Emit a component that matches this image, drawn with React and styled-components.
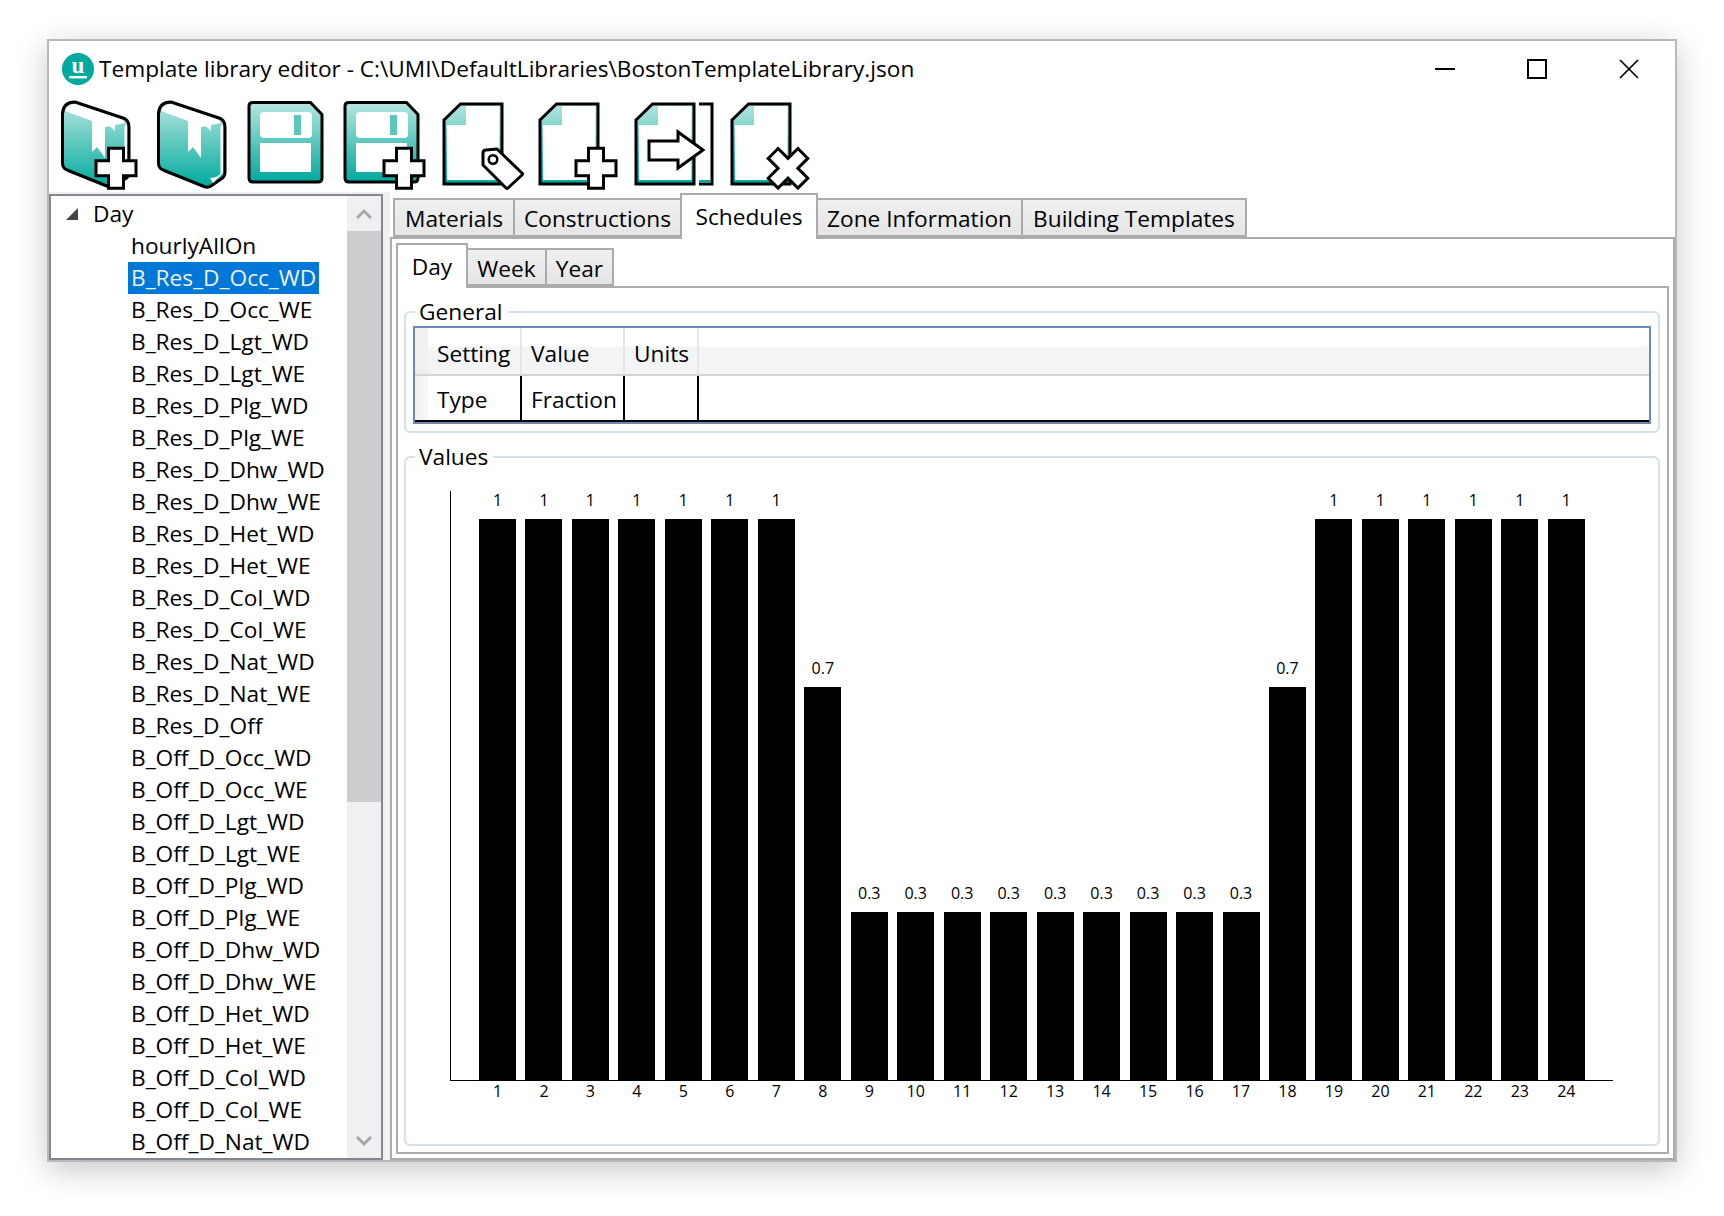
import React from "react";
import styled, { createGlobalStyle } from "styled-components";

const UI_FONT = `"Open Sans", "Noto Sans", "Liberation Sans", sans-serif`;
const TEXT_SIZE = "22.7px";

const GlobalStyle = createGlobalStyle`
  html, body {
    margin: 0;
    padding: 0;
    background: #fff;
  }
  body {
    font-family: ${UI_FONT};
    color: #000;
  }
  * {
    box-sizing: border-box;
  }
`;

const scheduleNames = [
  "hourlyAllOn",
  "B_Res_D_Occ_WD",
  "B_Res_D_Occ_WE",
  "B_Res_D_Lgt_WD",
  "B_Res_D_Lgt_WE",
  "B_Res_D_Plg_WD",
  "B_Res_D_Plg_WE",
  "B_Res_D_Dhw_WD",
  "B_Res_D_Dhw_WE",
  "B_Res_D_Het_WD",
  "B_Res_D_Het_WE",
  "B_Res_D_Col_WD",
  "B_Res_D_Col_WE",
  "B_Res_D_Nat_WD",
  "B_Res_D_Nat_WE",
  "B_Res_D_Off",
  "B_Off_D_Occ_WD",
  "B_Off_D_Occ_WE",
  "B_Off_D_Lgt_WD",
  "B_Off_D_Lgt_WE",
  "B_Off_D_Plg_WD",
  "B_Off_D_Plg_WE",
  "B_Off_D_Dhw_WD",
  "B_Off_D_Dhw_WE",
  "B_Off_D_Het_WD",
  "B_Off_D_Het_WE",
  "B_Off_D_Col_WD",
  "B_Off_D_Col_WE",
  "B_Off_D_Nat_WD",
];

const hourlyValues = [
  1, 1, 1, 1, 1, 1, 1, 0.7, 0.3, 0.3, 0.3, 0.3, 0.3, 0.3, 0.3, 0.3, 0.3, 0.7, 1,
  1, 1, 1, 1, 1,
];

const mainTabs = [
  { label: "Materials", width: 120 },
  { label: "Constructions", width: 167 },
  { label: "Schedules", width: 136, active: true },
  { label: "Zone Information", width: 205 },
  { label: "Building Templates", width: 224 },
];

const subTabs = [
  { label: "Day", width: 70, active: true },
  { label: "Week", width: 79 },
  { label: "Year", width: 67 },
];

const Page = styled.div`
  width: 1724px;
  height: 1216px;
  padding: 39px 0 0 47px;
`;

const Window = styled.div`
  display: flex;
  flex-direction: column;
  width: 1630px;
  height: 1123px;
  background: #fff;
  border: 2px solid #b9b9b9;
  box-shadow: 0 8px 30px rgba(0, 0, 0, 0.22);
`;

const TitleBar = styled.div`
  display: flex;
  align-items: center;
  height: 55px;
  padding-left: 13px;
`;

const TitleText = styled.div`
  flex: 1;
  margin-left: 5px;
  font-size: 22.65px;
  white-space: nowrap;
`;

const WindowButton = styled.button`
  display: flex;
  align-items: center;
  justify-content: center;
  width: 92px;
  height: 40px;
  padding: 0;
  border: 0;
  background: none;
`;

const WindowButtons = styled.div`
  display: flex;
`;

const Toolbar = styled.div`
  display: flex;
  height: 96px;
  padding-left: 9px;
`;

const ToolButton = styled.svg`
  display: block;
  width: 96px;
  height: 96px;
  overflow: visible;
`;

const Body = styled.div`
  display: flex;
  flex: 1;
  min-height: 0;
  background: #f0f0f0;
`;

const TreePanel = styled.div`
  display: flex;
  width: 334px;
  margin-top: 2px;
  background: #fff;
  border: 2px solid #828790;
  overflow: hidden;
`;

const TreeList = styled.div`
  flex: 1;
  padding-top: 1px;
  overflow: hidden;
  font-size: ${TEXT_SIZE};
`;

const TreeRootRow = styled.div`
  display: flex;
  align-items: center;
  height: 33px;
  padding-left: 15px;
  gap: 15px;
`;

const TreeRow = styled.div`
  height: 32px;
  padding-left: 77px;
  line-height: 32px;
  white-space: nowrap;
`;

const TreeLabel = styled.span`
  display: inline-block;
  height: 32px;
  padding: 0 3px;
  background: ${(p) => (p.$selected ? "#0078d7" : "transparent")};
  color: ${(p) => (p.$selected ? "#f0f0f0" : "#000")};
`;

const ScrollBar = styled.div`
  display: flex;
  flex-direction: column;
  width: 34px;
  background: #f0f0f0;
`;

const ScrollArrow = styled.div`
  display: flex;
  align-items: center;
  justify-content: center;
  height: 35px;
`;

const ScrollThumb = styled.div`
  height: 571px;
  background: #cdcdcd;
`;

const ScrollTrack = styled.div`
  flex: 1;
`;

const RightPane = styled.div`
  display: flex;
  flex-direction: column;
  width: 1285px;
  margin-left: 7px;
  padding-top: 1px;
  background: #fff;
`;

const TabStrip = styled.div`
  display: flex;
  align-items: flex-end;
  flex: none;
  height: ${(p) => p.$height}px;
  padding-left: ${(p) => p.$indent}px;
`;

const Tab = styled.div`
  position: relative;
  flex: none;
  width: ${(p) => p.$width + 2}px;
  height: ${(p) => (p.$active ? p.$tall : p.$short)}px;
  margin: 0 -2px ${(p) => (p.$active ? "-2px" : "0")} 0;
  padding-top: ${(p) => (p.$active ? 6 : 3)}px;
  border: 2px solid #ababab;
  border-bottom-width: ${(p) => (p.$active ? 0 : 2)}px;
  background: ${(p) =>
    p.$active ? "#fff" : "linear-gradient(#f0f0f0, #e5e5e5)"};
  font-size: ${TEXT_SIZE};
  line-height: 32px;
  text-align: center;
  white-space: nowrap;
  z-index: ${(p) => (p.$active ? 1 : 0)};
`;

const TabPanel = styled.div`
  display: flex;
  flex-direction: column;
  flex: 1;
  min-height: 0;
  padding: 4px;
  border: 2px solid #ababab;
`;

const SubPanel = styled.div`
  display: flex;
  flex-direction: column;
  flex: 1;
  min-height: 0;
  padding: 9px 7px 6px 6px;
  border: 2px solid #ababab;
`;

const Group = styled.fieldset`
  min-width: 0;
  margin: 0;
  padding: 0 7px 7px;
  border: 2px solid #d6e0e8;
  border-radius: 6px;
  & + & {
    margin-top: 9px;
    flex: 1;
  }
`;

const GroupTitle = styled.legend`
  height: 30px;
  margin-left: 2px;
  padding: 0 5px 0 4px;
  font-size: ${TEXT_SIZE};
  line-height: 30px;
`;

const DataGrid = styled.div`
  margin-top: -1px;
  border: 2px solid #6a8cb0;
`;

const GridRow = styled.div`
  display: grid;
  grid-template-columns: 13px 94px 103px 74px 1fr;
  grid-template-rows: ${(p) => p.$height - 2}px;
  height: ${(p) => p.$height}px;
  border-bottom: 2px solid ${(p) => p.$rule};
`;

const HeaderCell = styled.div`
  padding-left: 9px;
  border-right: 2px solid #e6e6e6;
  background: linear-gradient(#fff 0, #fff 42%, #f3f4f6 42%);
  font-size: ${TEXT_SIZE};
  line-height: 52px;
  &:last-child {
    border-right: 0;
  }
`;

const CornerCell = styled.div`
  background: #f0f0f0;
`;

const BodyCell = styled.div`
  padding-left: 9px;
  border-right: 2px solid #000;
  font-size: ${TEXT_SIZE};
  line-height: 48px;
  &:last-child {
    border-right: 0;
  }
`;

const RowHeadCell = styled.div`
  background: linear-gradient(90deg, #f0f0f0, #f8f8f8);
`;

const Chart = styled.div`
  margin: 19px 0 0 37px;
  width: 1163px;
`;

const Plot = styled.div`
  display: grid;
  grid-template-columns: repeat(24, 37px);
  grid-template-rows: minmax(0, 1fr);
  column-gap: 9.48px;
  align-items: end;
  height: 590px;
  padding-left: 28px;
  border-left: 1px solid #000;
  border-bottom: 1px solid #000;
`;

const BarColumn = styled.div`
  display: flex;
  flex-direction: column;
  align-items: center;
`;

const Bar = styled.div`
  width: 100%;
  height: ${(p) => Math.round(p.$value * 561)}px;
  background: #000;
`;

const ChartLabel = styled.div`
  font-size: 16px;
  line-height: 20px;
  text-align: center;
`;

const BarValue = styled(ChartLabel)`
  margin-bottom: 9px;
`;

const AxisRow = styled.div`
  display: grid;
  grid-template-columns: repeat(24, 37px);
  column-gap: 9.48px;
  padding: 0 0 0 28px;
  margin-left: 1px;
`;

const Plus = ({ cx = 58, cy = 72.3, angle = 0, arm = 20, half = 7.5 }) => (
  <path
    d={`M${cx - half} ${cy - arm}H${cx + half}V${cy - half}H${cx + arm}V${cy + half}H${cx + half}V${cy + arm}H${cx - half}V${cy + half}H${cx - arm}V${cy - half}H${cx - half}Z`}
    transform={angle ? `rotate(${angle} ${cx} ${cy})` : undefined}
    fill="#fff"
    stroke="#000"
    strokeWidth="3"
    strokeLinejoin="miter"
  />
);

const BookShape = () => (
  <>
    <path
      d="M4.5 18Q5 6 17 6L65 22Q71 24 71 31V76Q71 81 67 83L57 90Q54 92 50 90.5L9 74Q4.5 72 4.5 67Z"
      fill="url(#teal)"
      stroke="#000"
      strokeWidth="3"
      strokeLinejoin="round"
    />
    {/* page edge and top band */}
    <path d="M66.5 31L69 27V77L59 87L56 82Q62 82 66.5 78Z" fill="#fff" />
    <path d="M7 15Q9 8 17 8L65 24L67.5 27L57 29L56.5 36Q54 29 47 31V62L39 51L34 56V25Z" fill="#fff" />
  </>
);

const Floppy = () => (
  <>
    <path
      d="M3 6.5H60.5L72 18.5V82Q72 86 68 86H3Q-1 86 -1 82V10Q-1 6.5 3 6.5Z"
      fill="url(#teal)"
      stroke="#000"
      strokeWidth="3"
      strokeLinejoin="round"
    />
    <rect x="10" y="16" width="52" height="26" rx="4" fill="#fff" />
    <rect x="44" y="19" width="7" height="20" fill="#5cc8bc" />
    <rect x="10" y="47" width="51" height="29" fill="#fff" />
  </>
);

const Sheet = () => (
  <>
    <path
      d="M2 24L18.5 8H60V88H2Z"
      fill="url(#teal)"
      stroke="#000"
      strokeWidth="3"
      strokeLinejoin="miter"
    />
    <path d="M24 10H57.5V84H5V29H24Z" fill="#fff" />
  </>
);

const ToolIcon = ({ children, first }) => (
  <ToolButton viewBox="0 0 96 96">
    {first && (
      <defs>
        <linearGradient id="teal" x1="0" y1="0" x2="0" y2="1">
          <stop offset="0" stopColor="#b5e6df" />
          <stop offset="1" stopColor="#00a99d" />
        </linearGradient>
      </defs>
    )}
    {children}
  </ToolButton>
);

const Logo = () => (
  <svg width="32" height="32" viewBox="0 0 32 32">
    <circle cx="16" cy="16" r="16" fill="#00a99d" />
    <text
      x="16"
      y="20"
      fill="#fff"
      fontFamily="Liberation Serif, serif"
      fontWeight="700"
      fontSize="23"
      textAnchor="middle"
    >
      u
    </text>
    <rect x="7" y="23" width="18" height="2.4" fill="#fff" />
  </svg>
);

const Chevron = ({ up }) => (
  <svg width="16" height="12" viewBox="0 0 16 12">
    <polyline
      points={up ? "1,10 8,3 15,10" : "1,2 8,9 15,2"}
      fill="none"
      stroke="#a6a6a6"
      strokeWidth="3"
    />
  </svg>
);

const App = () => {
  return (
    <Page>
      <GlobalStyle />
      <Window>
        <TitleBar>
          <Logo />
          <TitleText>
            Template library editor - C:\UMI\DefaultLibraries\BostonTemplateLibrary.json
          </TitleText>
          <WindowButtons>
            <WindowButton>
              <svg width="22" height="22" viewBox="0 0 22 22">
                <rect x="1" y="10" width="20" height="2" fill="#000" />
              </svg>
            </WindowButton>
            <WindowButton>
              <svg width="20" height="20" viewBox="0 0 20 20">
                <rect x="1" y="1" width="18" height="18" fill="none" stroke="#000" strokeWidth="2" />
              </svg>
            </WindowButton>
            <WindowButton>
              <svg width="20" height="20" viewBox="0 0 20 20">
                <path d="M1 1L19 19M19 1L1 19" fill="none" stroke="#000" strokeWidth="1.7" />
              </svg>
            </WindowButton>
          </WindowButtons>
        </TitleBar>

        <Toolbar>
          <ToolIcon first>
            <BookShape />
            <Plus />
          </ToolIcon>
          <ToolIcon>
            <BookShape />
          </ToolIcon>
          <ToolIcon>
            <Floppy />
          </ToolIcon>
          <ToolIcon>
            <Floppy />
            <Plus />
          </ToolIcon>
          <ToolIcon>
            <Sheet />
            <path
              d="M41 57Q41 54 44 54L55 53L80 77Q81 78 80 79L66 92Q65 93 64 92L41 69Z"
              fill="#fff"
              stroke="#000"
              strokeWidth="3"
              strokeLinejoin="round"
            />
            <circle cx="51" cy="63.5" r="4.3" fill="#fff" stroke="#000" strokeWidth="2.5" />
          </ToolIcon>
          <ToolIcon>
            <Sheet />
            <Plus />
          </ToolIcon>
          <ToolIcon>
            <path d="M65 8H78V88H65" fill="#fff" stroke="#000" strokeWidth="3" />
            <path d="M65 84H76.5V86.5H65Z" fill="#00a99d" />
            <Sheet />
            <path
              d="M15 45H44V36L69 54L44 72V64H15Z"
              fill="#fff"
              stroke="#000"
              strokeWidth="3"
              strokeLinejoin="miter"
            />
          </ToolIcon>
          <ToolIcon>
            <Sheet />
            <Plus angle={45} arm={21} half={7} />
          </ToolIcon>
        </Toolbar>

        <Body>
          <TreePanel>
            <TreeList>
              <TreeRootRow>
                <svg width="12" height="12" viewBox="0 0 12 12">
                  <polygon points="12,0 12,12 0,12" fill="#444" />
                </svg>
                Day
              </TreeRootRow>
              {scheduleNames.map((name) => (
                <TreeRow key={name}>
                  <TreeLabel $selected={name === "B_Res_D_Occ_WD"}>{name}</TreeLabel>
                </TreeRow>
              ))}
            </TreeList>
            <ScrollBar>
              <ScrollArrow>
                <Chevron up />
              </ScrollArrow>
              <ScrollThumb />
              <ScrollTrack />
              <ScrollArrow>
                <Chevron />
              </ScrollArrow>
            </ScrollBar>
          </TreePanel>

          <RightPane>
            <TabStrip $height={44} $indent={3}>
              {mainTabs.map((t) => (
                <Tab key={t.label} $width={t.width} $active={t.active} $tall={46} $short={39}>
                  {t.label}
                </Tab>
              ))}
            </TabStrip>
            <TabPanel>
              <TabStrip $height={43} $indent={0}>
                {subTabs.map((t) => (
                  <Tab key={t.label} $width={t.width} $active={t.active} $tall={45} $short={38}>
                    {t.label}
                  </Tab>
                ))}
              </TabStrip>
              <SubPanel>
                <Group>
                  <GroupTitle>General</GroupTitle>
                  <DataGrid>
                    <GridRow $height={48} $rule="#d5d5d5">
                      <CornerCell />
                      <HeaderCell>Setting</HeaderCell>
                      <HeaderCell>Value</HeaderCell>
                      <HeaderCell>Units</HeaderCell>
                      <HeaderCell />
                    </GridRow>
                    <GridRow $height={46} $rule="#000">
                      <RowHeadCell />
                      <BodyCell>Type</BodyCell>
                      <BodyCell>Fraction</BodyCell>
                      <BodyCell />
                      <BodyCell />
                    </GridRow>
                  </DataGrid>
                </Group>
                <Group>
                  <GroupTitle>Values</GroupTitle>
                  <Chart>
                    <Plot>
                      {hourlyValues.map((v, i) => (
                        <BarColumn key={i}>
                          <BarValue>{v}</BarValue>
                          <Bar $value={v} />
                        </BarColumn>
                      ))}
                    </Plot>
                    <AxisRow>
                      {hourlyValues.map((v, i) => (
                        <ChartLabel key={i}>{i + 1}</ChartLabel>
                      ))}
                    </AxisRow>
                  </Chart>
                </Group>
              </SubPanel>
            </TabPanel>
          </RightPane>
        </Body>
      </Window>
    </Page>
  );
};

export default App;
